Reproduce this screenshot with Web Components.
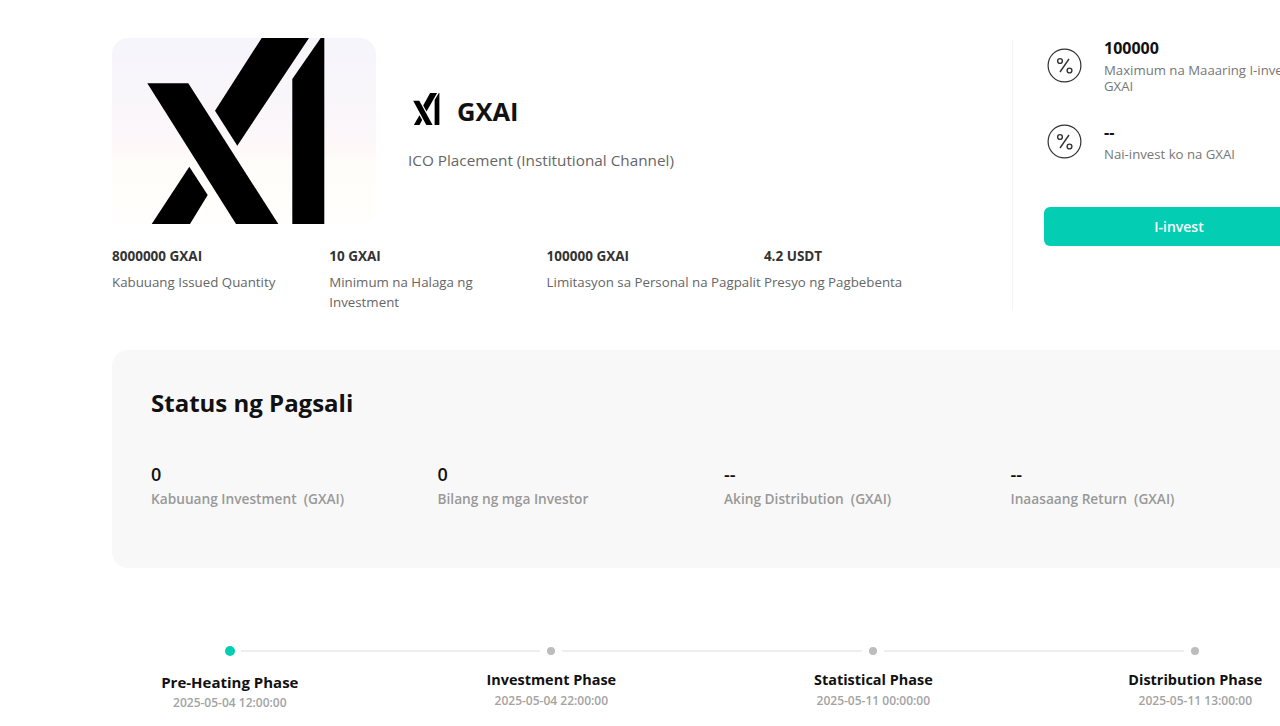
<!DOCTYPE html>
<html>
<head>
<meta charset="utf-8">
<title>GXAI</title>
<style>
html, body { margin: 0; padding: 0; background: #fff; overflow: hidden; height: 726px; }
body { font-family: "Open Sans", "Noto Sans", sans-serif; }
</style>
</head>
<body>
<ico-page>
    <ico-hero>
        <xai-logo slot="logo" style="width:264px;height:186px;border-radius:16px;background:linear-gradient(#f6f5fc 0%,#faf6fa 40%,#fef8f9 60%,#fffdf9 68%,#fffefc 100%)"></xai-logo>
        <xai-logo slot="mini" style="width:39px;height:32px"></xai-logo>
        <span slot="name">GXAI</span>
        <span slot="sub">ICO Placement (Institutional Channel)</span>
        <info-stat value="8000000 GXAI">Kabuuang Issued Quantity</info-stat>
        <info-stat value="10 GXAI">Minimum na Halaga ng Investment</info-stat>
        <info-stat value="100000 GXAI" nowrap>Limitasyon sa Personal na Pagpalit</info-stat>
        <info-stat value="4.2 USDT">Presyo ng Pagbebenta</info-stat>
    </ico-hero>
    <invest-side>
        <side-stat value="100000">Maximum na Maaaring I-invest na GXAI</side-stat>
        <side-stat value="--">Nai-invest ko na GXAI</side-stat>
    </invest-side>
    <status-panel heading="Status ng Pagsali">
        <status-item value="0">Kabuuang Investment &nbsp;(GXAI)</status-item>
        <status-item value="0">Bilang ng mga Investor</status-item>
        <status-item value="--">Aking Distribution &nbsp;(GXAI)</status-item>
        <status-item value="--">Inaasaang Return &nbsp;(GXAI)</status-item>
    </status-panel>
    <phase-line>
        <phase-step active name="Pre-Heating Phase" date="2025-05-04 12:00:00"></phase-step>
        <phase-step name="Investment Phase" date="2025-05-04 22:00:00"></phase-step>
        <phase-step name="Statistical Phase" date="2025-05-11 00:00:00"></phase-step>
        <phase-step last name="Distribution Phase" date="2025-05-11 13:00:00"></phase-step>
    </phase-line>
</ico-page>
<script>
class XaiLogo extends HTMLElement {
    constructor() {
        super()
        this.attachShadow({ mode: "open" })
        this.shadowRoot.innerHTML = `
        <style>
        :host { display: block; overflow: hidden; flex: none; }
        svg { display: block; width: 100%; height: 100%; }
        </style>
        <svg viewBox="112 38 264 186" preserveAspectRatio="none" fill="#000">
            <polygon points="261.7,38 309,38 237.3,145.7 215,110.7"/>
            <polygon points="320.7,38 324.3,38 324.3,224 292.3,224 292.3,79"/>
            <polygon points="147.3,83.3 188.3,83.3 278.3,224 236,224"/>
            <polygon points="189.3,166.7 207.7,195 190,224 151.7,224"/>
        </svg>`
    }
}
customElements.define("xai-logo", XaiLogo)

class IcoPage extends HTMLElement {
    constructor() {
        super()
        this.attachShadow({ mode: "open" })
        this.shadowRoot.innerHTML = `
        <style>
        :host {
            display: grid;
            grid-template-columns: 869px 1fr;
            column-gap: 31px;
            width: 1224px;
            margin-left: 112px;
            padding-top: 38px;
        }
        ::slotted(status-panel), ::slotted(phase-line) { grid-column: 1 / -1; }
        </style>
        <slot></slot>`
    }
}
customElements.define("ico-page", IcoPage)

class IcoHero extends HTMLElement {
    constructor() {
        super()
        this.attachShadow({ mode: "open" })
        this.shadowRoot.innerHTML = `
        <style>
        :host { display: block; }
        .top { display: flex; align-items: flex-start; gap: 32px; }
        .info { margin-top: 55px; }
        .title { display: flex; align-items: flex-start; gap: 10px; }
        ::slotted([slot=name]) { font-size: 25.5px; font-weight: 700; color: #111; line-height: 27px; margin-top: 5px; }
        ::slotted([slot=sub]) { display: block; font-size: 15.3px; color: #666; line-height: 20px; margin-top: 25px; }
        .stats { display: grid; grid-template-columns: repeat(4, 217.3px); margin-top: 22px; }
        </style>
        <div class="top">
            <slot name="logo"></slot>
            <div class="info">
                <div class="title"><slot name="mini"></slot><slot name="name"></slot></div>
                <slot name="sub"></slot>
            </div>
        </div>
        <div class="stats"><slot></slot></div>`
    }
}
customElements.define("ico-hero", IcoHero)

class InfoStat extends HTMLElement {
    constructor() {
        super()
        this.attachShadow({ mode: "open" })
        this.shadowRoot.innerHTML = `
        <style>
        :host { display: block; }
        .value { font-size: 13.5px; font-weight: 700; color: #333; line-height: 20px; }
        .label { font-size: 13.3px; color: #666; line-height: 20px; margin-top: 6px; padding-right: 20px; }
        :host([nowrap]) .label { white-space: nowrap; padding-right: 0; }
        </style>
        <div class="value"></div>
        <div class="label"><slot></slot></div>`
        this.shadowRoot.querySelector(".value").textContent = this.getAttribute("value")
    }
}
customElements.define("info-stat", InfoStat)

class InvestSide extends HTMLElement {
    constructor() {
        super()
        this.attachShadow({ mode: "open" })
        this.shadowRoot.innerHTML = `
        <style>
        :host {
            display: block;
            border-left: 1px solid #f5f5f5;
            padding-left: 31px;
            height: 270px;
            margin-top: 2px;
            box-sizing: border-box;
        }
        .stack { display: flex; flex-direction: column; gap: 30px; }
        button {
            display: block;
            width: 270px;
            height: 39px;
            margin-top: 45px;
            border: 0;
            border-radius: 6px;
            background: #03ceb4;
            color: #fff;
            font: 600 14px "Open Sans", "Noto Sans", sans-serif;
        }
        </style>
        <div class="stack"><slot></slot></div>
        <button>I-invest</button>`
    }
}
customElements.define("invest-side", InvestSide)

class SideStat extends HTMLElement {
    constructor() {
        super()
        this.attachShadow({ mode: "open" })
        this.shadowRoot.innerHTML = `
        <style>
        :host { display: flex; align-items: center; gap: 22px; width: 270px; }
        svg { flex: none; margin: -4px 0 0 3px; }
        .value { font-size: 16px; font-weight: 700; color: #111; line-height: 16px; }
        .label { font-size: 13.2px; color: #777; line-height: 16px; margin-top: 6px; width: 210px; }
        </style>
        <svg width="35" height="35" viewBox="0 0 35 35" fill="none" stroke="#333" stroke-width="1.4">
            <circle cx="17.5" cy="17.5" r="16.4" stroke-width="1.2"/>
            <line x1="22" y1="11" x2="13" y2="24"/>
            <circle cx="13" cy="13" r="2.4"/>
            <circle cx="22.5" cy="22.5" r="2.4"/>
        </svg>
        <div>
            <div class="value"></div>
            <div class="label"><slot></slot></div>
        </div>`
        this.shadowRoot.querySelector(".value").textContent = this.getAttribute("value")
    }
}
customElements.define("side-stat", SideStat)

class StatusPanel extends HTMLElement {
    constructor() {
        super()
        this.attachShadow({ mode: "open" })
        this.shadowRoot.innerHTML = `
        <style>
        :host {
            display: block;
            box-sizing: border-box;
            height: 218px;
            margin-top: 38px;
            padding: 36px 39px 0;
            border-radius: 16px;
            background: #f8f8f8;
        }
        h2 { margin: 0; font-size: 24px; font-weight: 700; color: #111; line-height: 34px; }
        .grid { display: grid; grid-template-columns: repeat(4, 286.5px); margin-top: 42px; }
        </style>
        <h2></h2>
        <div class="grid"><slot></slot></div>`
        this.shadowRoot.querySelector("h2").textContent = this.getAttribute("heading")
    }
}
customElements.define("status-panel", StatusPanel)

class StatusItem extends HTMLElement {
    constructor() {
        super()
        this.attachShadow({ mode: "open" })
        this.shadowRoot.innerHTML = `
        <style>
        :host { display: block; }
        .value { font-size: 18px; font-weight: 600; color: #111; line-height: 24px; }
        .label { font-size: 13.7px; font-weight: 600; color: #999; line-height: 20px; margin-top: 3px; white-space: nowrap; }
        </style>
        <div class="value"></div>
        <div class="label"><slot></slot></div>`
        this.shadowRoot.querySelector(".value").textContent = this.getAttribute("value")
    }
}
customElements.define("status-item", StatusItem)

class PhaseLine extends HTMLElement {
    constructor() {
        super()
        this.attachShadow({ mode: "open" })
        this.shadowRoot.innerHTML = `
        <style>
        :host {
            display: grid;
            grid-template-columns: repeat(4, 322px);
            margin: 78px 0 0 -43.7px;
        }
        </style>
        <slot></slot>`
    }
}
customElements.define("phase-line", PhaseLine)

class PhaseStep extends HTMLElement {
    constructor() {
        super()
        this.attachShadow({ mode: "open" })
        this.shadowRoot.innerHTML = `
        <style>
        :host { display: block; text-align: center; }
        .head { display: grid; grid-template-columns: 1fr auto 1fr; align-items: center; column-gap: 7px; height: 8px; padding-top: 1px; }
        .dot { width: 8px; height: 8px; border-radius: 50%; background: #bdbdbd; }
        .line { height: 2px; background: #eeeeee; margin-right: -150px; }
        :host([last]) .line { visibility: hidden; }
        .name { font-size: 14.45px; font-weight: 700; color: #111; line-height: 20px; margin-top: 15px; white-space: nowrap; }
        .date { font-size: 12px; font-weight: 600; color: #a3a3a3; line-height: 16px; margin-top: 3px; }
        :host([active]) .head { height: 10px; padding: 0 0 0 2px; column-gap: 6px; }
        :host([active]) .dot { width: 10px; height: 10px; background: #03ceb4; }
        :host([active]) .name { font-size: 15px; margin-top: 16px; padding-left: 1px; }
        :host([active]) .date { margin-top: 3px; padding-left: 1px; }
        </style>
        <div class="head"><span></span><span class="dot"></span><span class="line"></span></div>
        <div class="name"></div>
        <div class="date"></div>`
        this.shadowRoot.querySelector(".name").textContent = this.getAttribute("name")
        this.shadowRoot.querySelector(".date").textContent = this.getAttribute("date")
    }
}
customElements.define("phase-step", PhaseStep)
</script>
</body>
</html>
